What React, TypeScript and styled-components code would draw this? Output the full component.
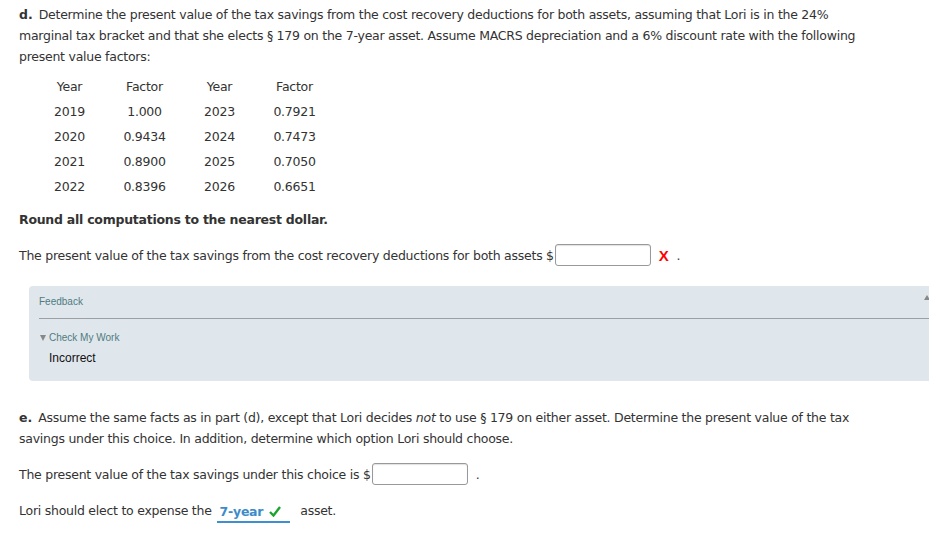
import React from "react";
import styled, { createGlobalStyle } from "styled-components";

const Global = createGlobalStyle`
  html, body { margin: 0; padding: 0; background: #fff; overflow: hidden; }
  body { font-family: "DejaVu Sans", Verdana, sans-serif; font-size: 12.5px; letter-spacing: -0.25px; color: #333; }
`;

const Page = styled.div`
  width: 960px;
  padding: 4px 0 0 19px;
  box-sizing: border-box;
`;

const Para = styled.p<{ $mt?: number }>`
  margin: ${(p) => p.$mt ?? 0}px 0 0 0;
  line-height: 21px;
  width: 860px;
`;

const Label = styled.b`
  margin-right: 6px;
  letter-spacing: 0;
`;

const Table = styled.div`
  display: grid;
  grid-template-columns: repeat(4, 75px);
  margin: 7px 0 0 13px;
`;

const Cell = styled.div`
  height: 25px;
  line-height: 25px;
  text-align: center;
`;

const Row = styled.div<{ $mt?: number }>`
  display: flex;
  align-items: center;
  min-height: 22px;
  margin-top: ${(p) => p.$mt ?? 0}px;
  white-space: nowrap;
`;

const Input = styled.div<{ $w: number }>`
  width: ${(p) => p.$w}px;
  height: 20px;
  border: 1px solid #999;
  border-radius: 3px;
  box-shadow: inset 0 1px 1px rgba(0, 0, 0, 0.12);
  background: #fff;
  margin-left: 1px;
`;

const Wrong = styled.span`
  font-family: "Liberation Sans", Arial, sans-serif;
  font-weight: bold;
  color: #f00;
  font-size: 15px;
  margin-left: 8px;
`;

const Dot = styled.span<{ $ml: number }>`
  margin-left: ${(p) => p.$ml}px;
`;

const Panel = styled.div`
  margin: 20px 0 0 10px;
  width: 915px;
  height: 95px;
  background: #dfe6ec;
  border-radius: 4px;
  padding: 0 0 0 10px;
  box-sizing: border-box;
  font-family: "Liberation Sans", Arial, sans-serif;
  letter-spacing: 0;
  position: relative;
`;

const PanelTitle = styled.div`
  font-size: 10px;
  color: #4f7c80;
  height: 32px;
  line-height: 31px;
  border-bottom: 1px solid #9aa0a4;
`;

const Collapse = styled.div`
  position: absolute;
  right: 14px;
  top: 9px;
  width: 0;
  height: 0;
  border-left: 3px solid transparent;
  border-right: 3px solid transparent;
  border-bottom: 5px solid #888;
`;

const Toggle = styled.div`
  margin-top: 13px;
  font-size: 10px;
  color: #4f7c80;
  display: flex;
  align-items: center;
  gap: 3px;
  padding-left: 1px;
`;

const Tri = styled.span`
  display: inline-block;
  width: 0;
  height: 0;
  border-left: 3px solid transparent;
  border-right: 3px solid transparent;
  border-top: 6px solid #888;
`;

const Result = styled.div`
  margin: 8px 0 0 10px;
  font-size: 12px;
  color: #111;
`;

const Select = styled.span`
  display: inline-flex;
  align-items: center;
  gap: 6px;
  margin: 4px 0 0 5px;
  padding: 0 9px 0 3px;
  height: 20px;
  border-bottom: 2px solid #3d8fcf;
  color: #3d8bc9;
  font-weight: bold;
`;

const Check = () => (
  <svg width="12" height="11" viewBox="0 0 12 11">
    <path d="M1 6 L4.5 9.5 L11 1" stroke="#1aa531" strokeWidth="2.4" fill="none" />
  </svg>
);

const rows = [
  ["2019", "1.000", "2023", "0.7921"],
  ["2020", "0.9434", "2024", "0.7473"],
  ["2021", "0.8900", "2025", "0.7050"],
  ["2022", "0.8396", "2026", "0.6651"],
];

export default function App() {
  return (
    <>
      <Global />
      <Page>
        <Para>
          <Label>d.</Label>Determine the present value of the tax savings from the cost recovery deductions for both
          assets, assuming that Lori is in the 24% marginal tax bracket and that she elects § 179 on the 7-year asset.
          Assume MACRS depreciation and a 6% discount rate with the following present value factors:
        </Para>
        <Table>
          {["Year", "Factor", "Year", "Factor"].map((h, i) => (
            <Cell key={"h" + i}>{h}</Cell>
          ))}
          {rows.flat().map((c, i) => (
            <Cell key={i}>{c}</Cell>
          ))}
        </Table>
        <Para $mt={10}>
          <b>Round all computations to the nearest dollar.</b>
        </Para>
        <Row $mt={14}>
          The present value of the tax savings from the cost recovery deductions for both assets $
          <Input $w={94} />
          <Wrong>X</Wrong>
          <Dot $ml={8}>.</Dot>
        </Row>
        <Panel>
          <Collapse />
          <PanelTitle>Feedback</PanelTitle>
          <Toggle>
            <Tri />
            Check My Work
          </Toggle>
          <Result>Incorrect</Result>
        </Panel>
        <Para $mt={26}>
          <Label>e.</Label>Assume the same facts as in part (d), except that Lori decides <i>not</i> to use § 179 on
          either asset. Determine the present value of the tax savings under this choice. In addition, determine which
          option Lori should choose.
        </Para>
        <Row $mt={14}>
          The present value of the tax savings under this choice is $
          <Input $w={94} />
          <Dot $ml={8}>.</Dot>
        </Row>
        <Row $mt={12}>
          Lori should elect to expense the
          <Select>
            7-year <Check />
          </Select>
          <Dot $ml={10}>asset.</Dot>
        </Row>
      </Page>
    </>
  );
}
